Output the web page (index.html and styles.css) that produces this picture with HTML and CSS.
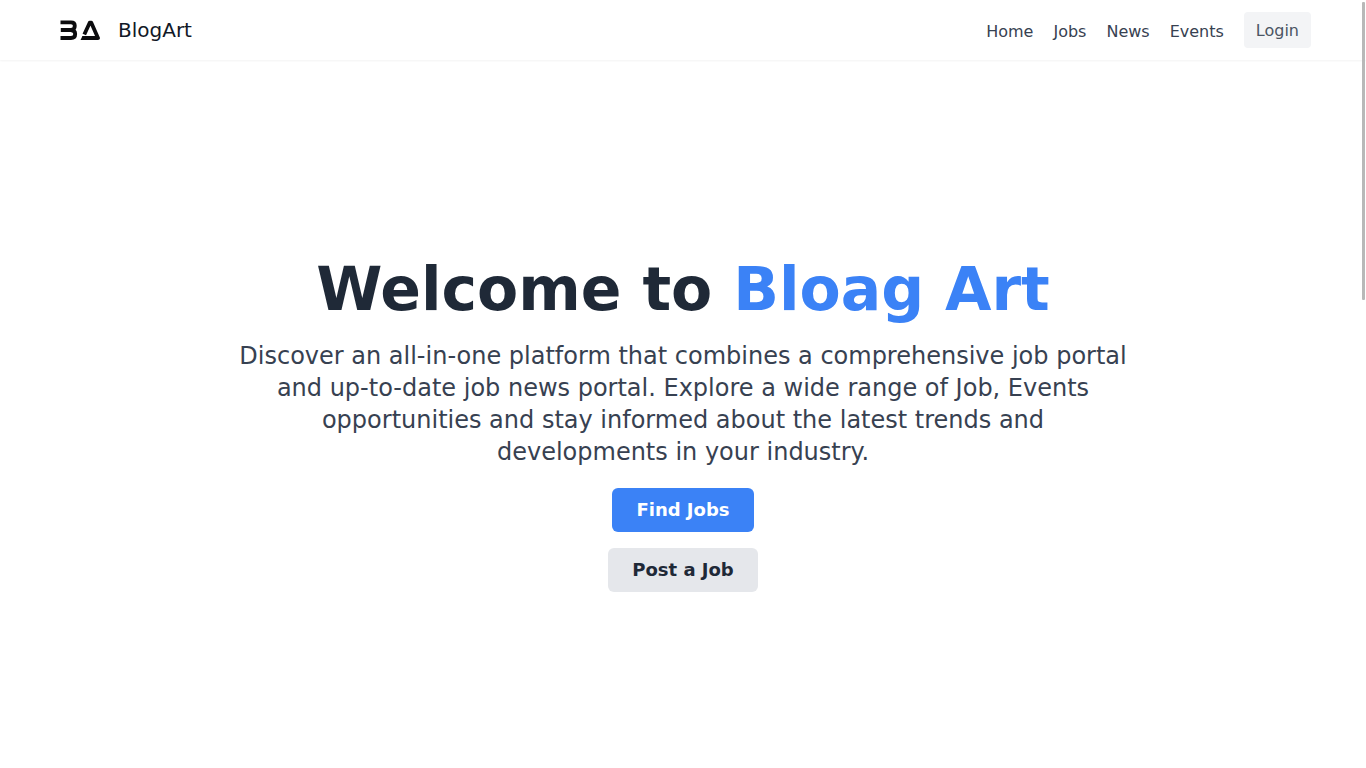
FILE: index.html
```html
<!DOCTYPE html>
<html lang="en">
<head>
<meta charset="utf-8">
<meta name="viewport" content="width=device-width, initial-scale=1">
<title>BlogArt</title>
<link rel="stylesheet" href="styles.css">
</head>
<body>
<header class="header">
  <a class="brand" href="#">
    <svg class="logo" viewBox="0 0 40 20" fill="none" stroke="#0c0c0e" stroke-width="3.800" stroke-linejoin="round" aria-hidden="true">
      <path d="M.5 2.300H11Q14.800 2.300 14.800 5.800Q14.800 10 11 10H.8M11 10Q15.200 10.500 15.200 14Q15.200 18 11 18H.5"/>
      <path d="M24.300 14.500L29.700 2.700H31.300L38 18H22.500"/>
      <path d="M22.500 16.100L20.500 19.900H24V16.100Z" fill="#0c0c0e" stroke="none"/>
    </svg>
    <span>BlogArt</span>
  </a>
  <nav class="nav">
    <a class="nav-link" href="#">Home</a>
    <a class="nav-link" href="#">Jobs</a>
    <a class="nav-link" href="#">News</a>
    <a class="nav-link" href="#">Events</a>
    <button class="login" type="button">Login</button>
  </nav>
</header>
<main class="hero">
  <h1 class="title">Welcome to <span class="accent">Bloag Art</span></h1>
  <p class="lead">Discover an all-in-one platform that combines a comprehensive job portal and up-to-date job news portal. Explore a wide range of Job, Events opportunities and stay informed about the latest trends and developments in your industry.</p>
  <div class="actions">
    <button class="button primary" type="button">Find Jobs</button>
    <button class="button secondary" type="button">Post a Job</button>
  </div>
</main>
<div class="scroll-thumb" aria-hidden="true"></div>
</body>
</html>
```
FILE: styles.css
```css
* {
  box-sizing: border-box;
}

body {
  margin: 0;
  min-height: 100vh;
  display: flex;
  flex-direction: column;
  background: #fff;
  color: #111827;
  font-family: "DejaVu Sans", sans-serif;
  font-size: 16px;
  line-height: 24px;
}

a {
  color: inherit;
  text-decoration: none;
}

button {
  border: 0;
  font: inherit;
  cursor: pointer;
}

.header {
  display: flex;
  align-items: center;
  justify-content: space-between;
  padding: 12px 55px 12px 60px;
  box-shadow: 0 1px 2px rgba(0, 0, 0, 0.05);
}

.brand {
  display: flex;
  align-items: center;
  gap: 18px;
  font-size: 20px;
  line-height: 28px;
}

.logo {
  width: 40px;
  height: 20px;
}

.nav {
  display: flex;
  align-items: center;
  gap: 20px;
}

.nav-link {
  padding-top: 4px;
  color: #374151;
}

.login {
  padding: 7px 12px 5px;
  border-radius: 4px;
  background: #f3f4f6;
  color: #4b5563;
}

.hero {
  flex: 1;
  display: flex;
  flex-direction: column;
  align-items: center;
  justify-content: center;
  padding: 82px 16px 60px;
  text-align: center;
}

.title {
  margin: 0 0 20px;
  color: #1f2937;
  font-size: 60px;
  font-weight: 700;
  line-height: 62px;
}

.accent {
  color: #3b82f6;
}

.lead {
  max-width: 896px;
  margin: 0 0 20px;
  color: #374151;
  font-size: 24px;
  line-height: 32px;
}

.actions {
  display: flex;
  flex-direction: column;
  align-items: center;
  gap: 16px;
}

.button {
  padding: 8px 24px;
  border-radius: 6px;
  font-size: 18px;
  font-weight: 700;
  line-height: 28px;
}

.primary {
  background: #3b82f6;
  color: #fff;
}

.secondary {
  background: #e5e7eb;
  color: #1f2937;
}

.scroll-thumb {
  position: fixed;
  top: 2px;
  right: 1px;
  width: 3px;
  height: 298px;
  border-radius: 1px;
  background: #b8b8b8;
}
```
